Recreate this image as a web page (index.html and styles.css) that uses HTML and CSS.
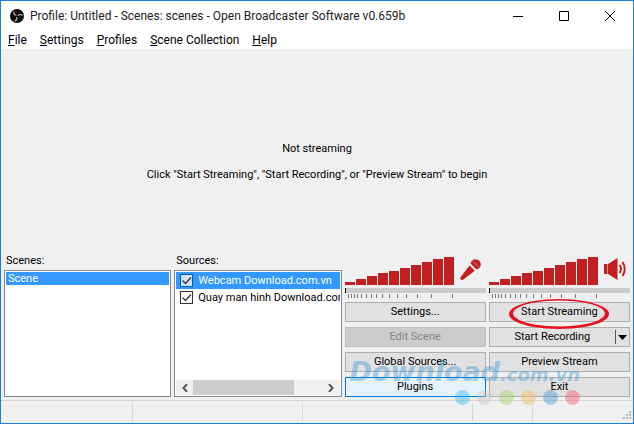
FILE: index.html
```html
<!DOCTYPE html>
<html lang="en">
<head>
    <meta charset="UTF-8">
    <meta name="viewport" content="width=device-width, initial-scale=1">
    <title>Open Broadcaster Software</title>
    <link rel="stylesheet" href="styles.css">
</head>

<body>
    <header class="titlebar">
        <svg class="app-icon" viewBox="0 0 14 14" width="14" height="14">
            <circle cx="7" cy="7" r="7" fill="#0c0c0c"/>
            <g fill="none" stroke="#c9c9c9" stroke-width="1.1">
                <path d="M4 2.4C3.4 4.8 4.6 6.2 6.4 6.2"/>
                <path d="M4 2.4C3.4 4.8 4.6 6.2 6.4 6.2" transform="rotate(120 7 7)"/>
                <path d="M4 2.4C3.4 4.8 4.6 6.2 6.4 6.2" transform="rotate(240 7 7)"/>
            </g>
        </svg>
        <h1 class="title">Profile: Untitled - Scenes: scenes - Open Broadcaster Software v0.659b</h1>
        <div class="window-buttons">
            <button aria-label="Minimize"><svg width="10" height="10"><path d="M0 5.5h10" stroke="#000"/></svg></button>
            <button aria-label="Maximize"><svg width="10" height="10"><path d="M.5.5h9v9h-9z" fill="none" stroke="#000"/></svg></button>
            <button aria-label="Close"><svg width="10" height="10"><path d="M0 0l10 10M10 0L0 10" stroke="#000"/></svg></button>
        </div>
    </header>

    <nav class="menu">
        <button><u>F</u>ile</button>
        <button><u>S</u>ettings</button>
        <button><u>P</u>rofiles</button>
        <button><u>S</u>cene Collection</button>
        <button><u>H</u>elp</button>
    </nav>

    <main class="preview">
        <p>Not streaming</p>
        <p>Click "Start Streaming", "Start Recording", or "Preview Stream" to begin</p>
    </main>

    <section class="panels">
        <div class="panel">
            <h2>Scenes:</h2>
            <ul class="listbox scenes">
                <li class="selected">Scene</li>
            </ul>
        </div>

        <div class="panel">
            <h2>Sources:</h2>
            <div class="listbox sources">
                <label class="selected"><input type="checkbox" checked>Webcam Download.com.vn</label>
                <label><input type="checkbox" checked>Quay man hinh Download.com.vn</label>
                <div class="scrollbar">
                    <button aria-label="Scroll left"><svg width="6" height="8"><path d="M5 0L1.500 4L5 8" fill="none" stroke="#555" stroke-width="2"/></svg></button>
                    <div class="track"><div class="thumb"></div></div>
                    <button aria-label="Scroll right"><svg width="6" height="8"><path d="M1 0L4.500 4L1 8" fill="none" stroke="#555" stroke-width="2"/></svg></button>
                </div>
            </div>
        </div>

        <div class="controls">
            <div class="volume">
                <svg class="meter" width="110" height="28" fill="#c02020">
                    <path d="M0 25h10v3H0zM11 22h10v6H11zM22 19h10v9H22zM33 16h10v12H33zM44 14h10v14H44zM55 11h10v17H55zM66 8h10v20H66zM77 5h10v23H77zM88 2h10v26H88zM99 0h10v28H99z"/>
                </svg>
                <svg class="volume-icon" width="24" height="28" fill="#c02020">
                    <path d="M9.500 8.500L14.800 13.800L3 22.800Q1.500 23.500 .5 22.300Q-.2 21.200 .7 20z"/>
                    <path d="M10.500 6.500Q11.500 2.500 15.500 2.300Q20.500 2.500 20.800 7.500Q20.500 11.500 16.500 12.500z"/>
                    <path d="M9.800 7L16.200 13.300" stroke="#f0f0f0" stroke-width=".8"/>
                    <path d="M13.300 4.500L18.800 10" stroke="#e89090" stroke-width=".8"/>
                </svg>
            </div>
            <svg class="ticks" height="11" role="img" aria-label="Microphone level">
                <rect width="100%" height="5" fill="#cacaca"/>
                <rect width="1" height="5"/>
                <path d="M3.500 6v4M6.500 6v4M9.500 6v4M12.500 6v4M16.500 6v4M21.500 6v4M26.500 6v4M31.500 6v4M37.500 6v4M44.500 6v4M52.500 6v4M61.500 6v4M72.500 6v4M86.500 6v4M107.500 6v4" stroke="#777"/>
            </svg>
            <button class="btn">Settings...</button>
            <button class="btn" disabled>Edit Scene</button>
            <button class="btn">Global Sources...</button>
            <button class="btn focused">Plugins</button>
        </div>

        <div class="controls">
            <div class="volume">
                <svg class="meter" width="110" height="28" fill="#c02020">
                    <path d="M0 25h10v3H0zM11 22h10v6H11zM22 19h10v9H22zM33 16h10v12H33zM44 14h10v14H44zM55 11h10v17H55zM66 8h10v20H66zM77 5h10v23H77zM88 2h10v26H88zM99 0h10v28H99z"/>
                </svg>
                <svg class="volume-icon" width="24" height="28" fill="#c02020">
                    <path d="M0 7h3.500v10H0zM4 7L13.500 1v22L4 17z"/>
                    <path d="M15.500 8Q18.500 12 15.500 16M18.500 5Q23 12 18.500 19" fill="none" stroke="#c02020" stroke-width="2"/>
                </svg>
            </div>
            <svg class="ticks" height="11" role="img" aria-label="Speaker level">
                <rect width="100%" height="5" fill="#cacaca"/>
                <rect width="1" height="5"/>
                <path d="M3.500 6v4M6.500 6v4M9.500 6v4M12.500 6v4M16.500 6v4M21.500 6v4M26.500 6v4M31.500 6v4M37.500 6v4M44.500 6v4M52.500 6v4M61.500 6v4M72.500 6v4M86.500 6v4M107.500 6v4" stroke="#777"/>
            </svg>
            <div class="marked">
                <button class="btn">Start Streaming</button>
                <svg class="ring" viewBox="0 0 100 30" width="100" height="30">
                    <path d="M50 0a50 15 0 1 0 .01 0zM50 1.500a46 13 0 1 1-.01 0z" fill="#e8101c" fill-rule="evenodd"/>
                </svg>
            </div>
            <div class="split">
                <button class="btn">Start Recording</button>
                <button class="drop" aria-label="Recording options"><svg width="9" height="5"><path d="M0 0h9L4.500 5z"/></svg></button>
            </div>
            <button class="btn">Preview Stream</button>
            <button class="btn">Exit</button>
        </div>

        <div class="watermark">
            <div class="brand">Download<span>.com.vn</span></div>
            <div class="dots"><i class="sky"></i><i class="grey"></i><i class="green"></i><i class="orange"></i><i class="blue"></i><i class="red"></i></div>
        </div>
    </section>

    <footer class="statusbar">
        <span class="first"></span><span></span><span></span><span class="short"></span>
        <svg class="grip" width="9" height="9" fill="#b8b8b8">
            <path d="M6 0h2v2H6zM3 3h2v2H3zM6 3h2v2H6zM0 6h2v2H0zM3 6h2v2H3zM6 6h2v2H6z"/>
        </svg>
    </footer>
</body>
</html>
```
FILE: styles.css
```css
* {
    box-sizing: border-box;
}

body {
    display: flex;
    flex-direction: column;
    min-height: 100vh;
    margin: 0;
    border: 1px solid #1a80d5;
    background: #f0f0f0;
    color: #000;
    font-family: Roboto, 'Liberation Sans', sans-serif;
    font-size: 11px;
    line-height: 14px;
}

h1, h2, p, ul {
    margin: 0;
    padding: 0;
    font-size: inherit;
    font-weight: normal;
}

button {
    padding: 0;
    border: none;
    background: none;
    color: inherit;
    font: inherit;
}

svg {
    display: block;
}

/* title bar and menu */
.titlebar {
    display: flex;
    align-items: center;
    height: 29px;
    padding-left: 9px;
    background: #fff;
    font-size: 12px;
    color: #222;
}

.title {
    margin-left: 6px;
}

.window-buttons {
    display: flex;
    margin-left: auto;
}

.window-buttons button {
    display: grid;
    place-items: center;
    width: 46px;
    height: 29px;
}

.menu {
    display: flex;
    gap: 13px;
    height: 19px;
    padding: 1px 0 0 7px;
    background: #fff;
    font-size: 12px;
}

/* preview area */
.preview {
    display: flex;
    flex: 1;
    flex-direction: column;
    align-items: center;
    justify-content: center;
    gap: 12px;
    padding-top: 20px;
}

/* bottom panels */
.panels {
    position: relative;
    display: grid;
    grid-template-columns: 167fr 167fr 141fr 141fr;
    gap: 3px;
    padding: 0 3px 3px;
}

.panel {
    display: flex;
    flex-direction: column;
    min-width: 0;
}

.panel h2 {
    padding-left: 2px;
    margin-bottom: 2px;
}

.listbox {
    flex: 1;
    padding: 1px;
    border: 1px solid #828790;
    background: #fff;
    list-style: none;
    overflow: hidden;
}

.scenes li {
    height: 13px;
    padding-left: 2px;
    line-height: 13px;
}

.selected {
    background: #3399ff;
    color: #fff;
}

.sources {
    display: flex;
    flex-direction: column;
}

.sources label {
    display: flex;
    align-items: center;
    gap: 5px;
    height: 17px;
    padding-left: 4px;
    white-space: nowrap;
    overflow: hidden;
}

.sources input {
    appearance: none;
    flex: none;
    width: 13px;
    height: 13px;
    margin: 0;
    border: 1px solid #333;
    background: #fff url("data:image/svg+xml,%3Csvg xmlns='http://www.w3.org/2000/svg' width='11' height='11'%3E%3Cpath d='M1.500 5.500L4.500 8.500L10 2.500' fill='none' stroke='%23333' stroke-width='1.300'/%3E%3C/svg%3E");
}

.sources .selected input {
    border-color: #0a5aa8;
    background-color: #cce4f7;
}

.scrollbar {
    display: flex;
    height: 15px;
    margin-top: auto;
    background: #f0f0f0;
}

.scrollbar button {
    display: grid;
    place-items: center;
    width: 17px;
}

.track {
    flex: 1;
}

.thumb {
    width: 78%;
    height: 100%;
    background: #cdcdcd;
}

/* volume meters and buttons */
.controls {
    display: flex;
    flex-direction: column;
    gap: 5px;
}

.volume {
    display: flex;
    gap: 5px;
    margin-top: 3px;
}

.ticks {
    width: 100%;
    margin: -2px 0 -2px;
}

.btn {
    width: 100%;
    height: 20px;
    border: 1px solid #adadad;
    background: #e1e1e1;
}

.btn:disabled {
    border-color: #bfbfbf;
    background: #cccccc;
    color: #838383;
}

.focused {
    border-color: #0078d7;
    background: #e5f1fb;
}

.marked {
    position: relative;
}

.ring {
    position: absolute;
    top: -3px;
    left: 50%;
    margin-left: -50px;
    pointer-events: none;
}

.split {
    display: flex;
    border: 1px solid #adadad;
    background: #e1e1e1;
}

.split .btn {
    height: 18px;
    border: none;
}

.drop {
    display: grid;
    flex: none;
    place-items: center;
    width: 14px;
    height: 14px;
    margin: 2px 0;
    border-left: 1px solid #555;
}

.watermark {
    position: absolute;
    right: 53px;
    bottom: -5px;
    opacity: 0.4;
    pointer-events: none;
}

.brand {
    color: #3a96d6;
    font: italic bold 27px/30px 'DejaVu Sans', sans-serif;
}

.brand span {
    font-size: 18px;
}

.dots {
    display: flex;
    justify-content: flex-end;
    gap: 7px;
}

.dots i {
    width: 15px;
    height: 15px;
    border-radius: 50%;
}

.sky { background: #25b7ee; }
.grey { background: #c8c8c8; }
.green { background: #9ccf58; }
.orange { background: #f8b750; }
.blue { background: #3a93d0; }
.red { background: #ee505c; }

/* status bar */
.statusbar {
    display: flex;
    height: 23px;
    border-top: 1px solid #d7d7d7;
}

.statusbar span {
    width: 170px;
    margin: 2px 0;
    border-right: 1px solid #d7d7d7;
}

.statusbar .first {
    width: 132px;
}

.statusbar .short {
    width: 60px;
}

.grip {
    align-self: flex-end;
    margin: 0 1px 3px auto;
}
```
